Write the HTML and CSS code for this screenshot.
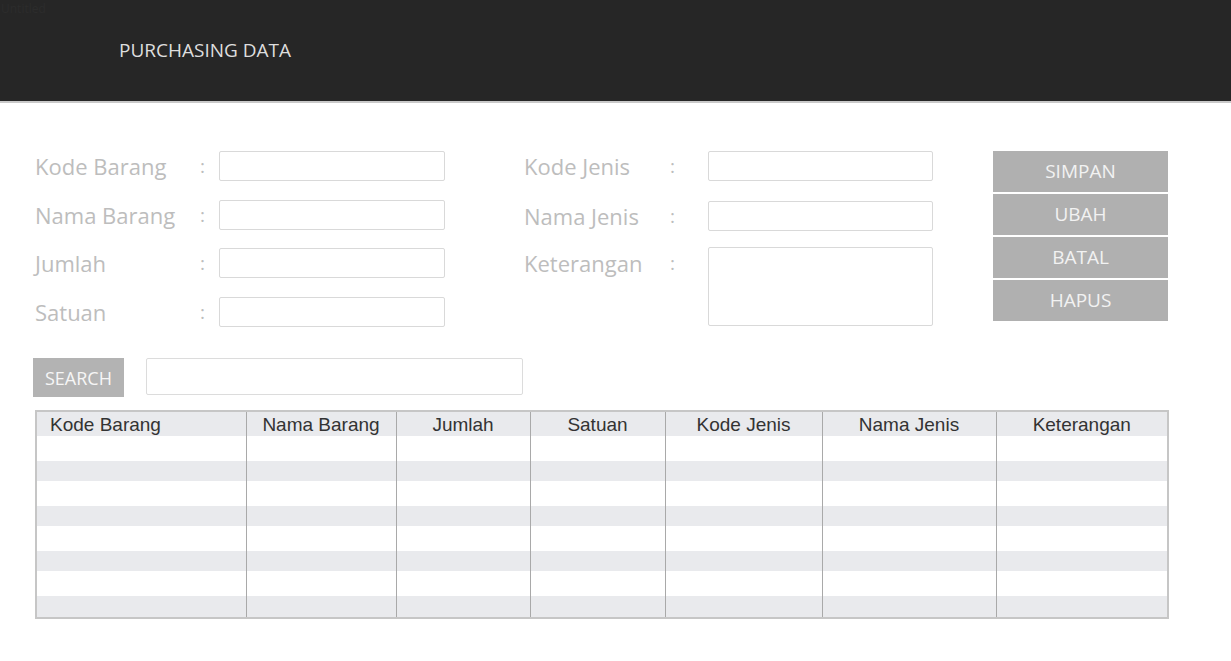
FILE: index.html
```html
<!DOCTYPE html>
<html lang="id">
<head>
<meta charset="utf-8">
<title>Purchasing Data</title>
<link rel="stylesheet" href="styles.css">
</head>
<body>
<header class="topbar">
  <div class="app-name">Untitled</div>
  <h1 class="title">PURCHASING DATA</h1>
</header>
<main class="content">
  <section class="form-area">
    <div class="fields fields-left">
      <label class="lbl">Kode Barang</label><span class="colon">:</span><input class="box" type="text">
      <label class="lbl">Nama Barang</label><span class="colon">:</span><input class="box" type="text">
      <label class="lbl">Jumlah</label><span class="colon">:</span><input class="box" type="text">
      <label class="lbl">Satuan</label><span class="colon">:</span><input class="box" type="text">
    </div>
    <div class="fields fields-mid">
      <label class="lbl">Kode Jenis</label><span class="colon">:</span><input class="box" type="text">
      <label class="lbl">Nama Jenis</label><span class="colon">:</span><input class="box" type="text">
      <label class="lbl top">Keterangan</label><span class="colon top">:</span><textarea class="box area"></textarea>
    </div>
    <div class="actions">
      <button class="btn">SIMPAN</button>
      <button class="btn">UBAH</button>
      <button class="btn">BATAL</button>
      <button class="btn">HAPUS</button>
    </div>
  </section>
  <div class="search-row">
    <button class="search-btn">SEARCH</button>
    <input class="search-box" type="text">
  </div>
  <table class="grid">
    <colgroup>
      <col class="c1"><col class="c2"><col class="c3"><col class="c4"><col class="c5"><col class="c6"><col class="c7">
    </colgroup>
    <thead>
      <tr>
        <th class="first">Kode Barang</th><th>Nama Barang</th><th>Jumlah</th><th>Satuan</th><th>Kode Jenis</th><th>Nama Jenis</th><th>Keterangan</th>
      </tr>
    </thead>
    <tbody>
      <tr class="w"><td></td><td></td><td></td><td></td><td></td><td></td><td></td></tr>
      <tr class="g"><td></td><td></td><td></td><td></td><td></td><td></td><td></td></tr>
      <tr class="w"><td></td><td></td><td></td><td></td><td></td><td></td><td></td></tr>
      <tr class="g"><td></td><td></td><td></td><td></td><td></td><td></td><td></td></tr>
      <tr class="w"><td></td><td></td><td></td><td></td><td></td><td></td><td></td></tr>
      <tr class="g"><td></td><td></td><td></td><td></td><td></td><td></td><td></td></tr>
      <tr class="w"><td></td><td></td><td></td><td></td><td></td><td></td><td></td></tr>
      <tr class="g last"><td></td><td></td><td></td><td></td><td></td><td></td><td></td></tr>
    </tbody>
  </table>
</main>
</body>
</html>
```

FILE: styles.css
```css
* { box-sizing: border-box; }

html, body {
  margin: 0;
  padding: 0;
  background: #ffffff;
  font-family: "Open Sans", "Noto Sans", sans-serif;
}

.topbar {
  height: 103px;
  background: #262626;
  border-bottom: 2px solid #c9c9c9;
  position: relative;
}

.app-name {
  position: absolute;
  left: 1px;
  top: 2px;
  font-size: 12px;
  line-height: 14px;
  color: #2c2c2c;
}

.title {
  margin: 0;
  padding: 38px 0 0 119px;
  font-size: 19px;
  font-weight: 400;
  line-height: 25px;
  color: #dedede;
}

.content {
  padding: 48px 0 0 33px;
}

.form-area {
  display: flex;
  align-items: flex-start;
  margin-left: 2px;
}

.fields {
  display: grid;
  align-items: center;
}

.fields-left {
  grid-template-columns: 165px 19px 226px;
  grid-template-rows: 30px 30px 30px 30px;
  row-gap: 18.7px;
}

.fields-mid {
  margin-left: 79px;
  grid-template-columns: 146px 38px 225px;
  grid-template-rows: 30px 30px 75px;
  row-gap: 20px;
}

.lbl, .colon {
  font-size: 22px;
  line-height: 30px;
  color: #bdbdbd;
  white-space: nowrap;
}

.colon {
  font-size: 19px;
}

.top { align-self: start; margin-top: -3px; }

.box {
  display: block;
  width: 100%;
  height: 30px;
  border: 1px solid #d9d9d9;
  border-radius: 2px;
  background: #fff;
  margin: 0;
  padding: 0;
}

.area {
  align-self: start;
  height: 79px;
  margin-top: -4px;
  resize: none;
}

.actions {
  margin-left: 60px;
  display: flex;
  flex-direction: column;
  gap: 2px;
  width: 175px;
}

.btn {
  height: 41px;
  border: none;
  margin: 0;
  padding: 0;
  background: #b0b0b0;
  color: #f2f2f2;
  font-family: "Open Sans", "Noto Sans", sans-serif;
  font-size: 19px;
  line-height: 41px;
}

.search-row {
  display: flex;
  align-items: flex-start;
  margin-top: 31px;
}

.search-btn {
  width: 91px;
  height: 39px;
  border: none;
  margin: 0;
  padding: 0;
  background: #b3b3b3;
  color: #f6f6f6;
  font-family: "Open Sans", "Noto Sans", sans-serif;
  font-size: 18px;
}

.search-box {
  margin: 0 0 0 22px;
  width: 377px;
  height: 37px;
  border: 1px solid #dcdcdc;
  border-radius: 2px;
}

.grid {
  margin: 13px 0 0 2px;
  width: 1132px;
  border-collapse: collapse;
  table-layout: fixed;
  border: 2px solid #c6c6c6;
  font-family: "Liberation Sans", Arial, sans-serif;
  color: #333;
}

.c1 { width: 210px; }
.c2 { width: 150px; }
.c3 { width: 134px; }
.c4 { width: 135px; }
.c5 { width: 157px; }
.c6 { width: 174px; }
.c7 { width: 172px; }

.grid th, .grid td {
  border-left: 1px solid #a9a9a9;
  border-right: 1px solid #a9a9a9;
  padding: 0;
}

.grid thead tr { height: 24px; background: #e9eaed; }

.grid th {
  font-size: 19px;
  font-weight: 400;
  line-height: 22px;
  padding-top: 2px;
  text-align: center;
  white-space: nowrap;
}

.grid th.first {
  text-align: left;
  padding-left: 13px;
}

.grid tr.w { height: 25px; background: #ffffff; }
.grid tr.g { height: 20px; background: #e9eaed; }
.grid tr.last { height: 22px; }
```
